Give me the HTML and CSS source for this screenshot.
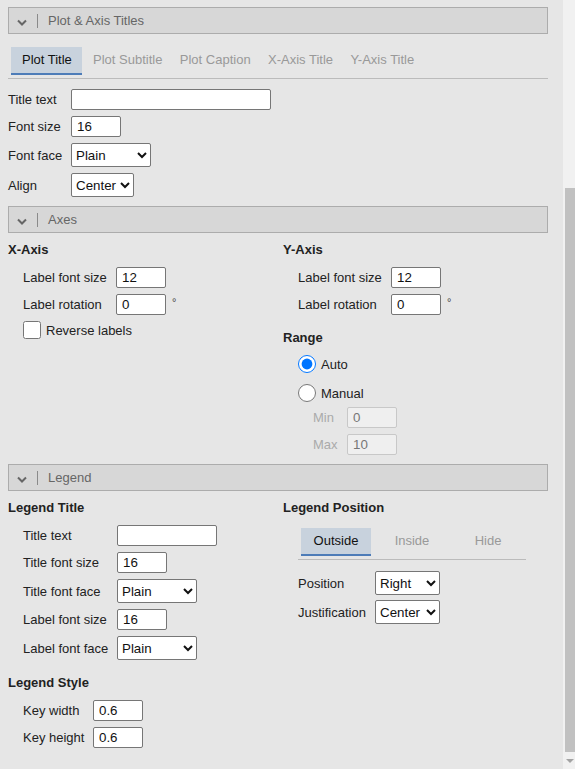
FILE: index.html
```html
<!DOCTYPE html>
<html lang="en">
<head>
    <meta charset="UTF-8">
    <meta name="viewport" content="width=device-width, initial-scale=1.0">
    <title>Plot Options</title>
    <link rel="stylesheet" href="styles.css">
</head>
<body>

<div class="page">
  <div class="panel">

    <!-- Plot & Axis Titles -->
    <div class="section-head">
      <svg class="chevron" width="10" height="7" viewBox="0 0 10 7"><path d="M1 1.5 L5 5.5 L9 1.5" fill="none" stroke="#666" stroke-width="2"/></svg>
      <span class="sep"></span>
      <span class="section-title">Plot &amp; Axis Titles</span>
    </div>

    <ul class="tabs tabs-top">
      <li class="tab active">Plot Title</li>
      <li class="tab">Plot Subtitle</li>
      <li class="tab">Plot Caption</li>
      <li class="tab">X-Axis Title</li>
      <li class="tab">Y-Axis Title</li>
    </ul>

    <div class="form form-title">
      <label>Title text</label>
      <input type="text" class="w200" value="">
      <label>Font size</label>
      <input type="text" class="w50" value="16">
      <label>Font face</label>
      <select class="w80"><option>Plain</option></select>
      <label>Align</label>
      <select class="w63"><option>Center</option></select>
    </div>

    <!-- Axes -->
    <div class="section-head">
      <svg class="chevron" width="10" height="7" viewBox="0 0 10 7"><path d="M1 1.5 L5 5.5 L9 1.5" fill="none" stroke="#666" stroke-width="2"/></svg>
      <span class="sep"></span>
      <span class="section-title">Axes</span>
    </div>

    <div class="columns">
      <div class="col">
        <h3>X-Axis</h3>
        <div class="form form-axis">
          <label>Label font size</label>
          <div class="field"><input type="text" class="w50" value="12"></div>
          <label>Label rotation</label>
          <div class="field"><input type="text" class="w50" value="0"><span class="deg">&deg;</span></div>
        </div>
        <label class="check"><input type="checkbox"> Reverse labels</label>
      </div>
      <div class="col">
        <h3>Y-Axis</h3>
        <div class="form form-axis">
          <label>Label font size</label>
          <div class="field"><input type="text" class="w50" value="12"></div>
          <label>Label rotation</label>
          <div class="field"><input type="text" class="w50" value="0"><span class="deg">&deg;</span></div>
        </div>
        <h3 class="sub">Range</h3>
        <div class="radios">
          <label class="radio"><input type="radio" name="range" checked> Auto</label>
          <label class="radio"><input type="radio" name="range"> Manual</label>
        </div>
        <div class="form form-range">
          <label>Min</label>
          <input type="text" class="w50" value="0" disabled>
          <label>Max</label>
          <input type="text" class="w50" value="10" disabled>
        </div>
      </div>
    </div>

    <!-- Legend -->
    <div class="section-head">
      <svg class="chevron" width="10" height="7" viewBox="0 0 10 7"><path d="M1 1.5 L5 5.5 L9 1.5" fill="none" stroke="#666" stroke-width="2"/></svg>
      <span class="sep"></span>
      <span class="section-title">Legend</span>
    </div>

    <div class="columns">
      <div class="col">
        <h3>Legend Title</h3>
        <div class="form form-legend">
          <label>Title text</label>
          <input type="text" class="w100" value="">
          <label>Title font size</label>
          <input type="text" class="w50" value="16">
          <label>Title font face</label>
          <select class="w80"><option>Plain</option></select>
          <label>Label font size</label>
          <input type="text" class="w50" value="16">
          <label>Label font face</label>
          <select class="w80"><option>Plain</option></select>
        </div>
        <h3 class="sub">Legend Style</h3>
        <div class="form form-style">
          <label>Key width</label>
          <input type="text" class="w50" value="0.6">
          <label>Key height</label>
          <input type="text" class="w50" value="0.6">
        </div>
      </div>
      <div class="col">
        <h3>Legend Position</h3>
        <ul class="tabs tabs-small">
          <li class="tab active">Outside</li>
          <li class="tab">Inside</li>
          <li class="tab">Hide</li>
        </ul>
        <div class="form form-position">
          <label>Position</label>
          <select class="w64"><option>Right</option></select>
          <label>Justification</label>
          <select class="w64"><option>Center</option></select>
        </div>
      </div>
    </div>

  </div>

  <div class="scrollbar">
    <div class="track"></div>
    <div class="thumb"></div>
    <div class="arrow"></div>
  </div>
</div>

</body>
</html>
```

FILE: styles.css
```css
body {
    margin: 0;
    height: 769px;
    overflow: hidden;
    background-color: #e6e6e6;
    font-family: 'Liberation Sans', Arial, sans-serif;
    font-size: 13px;
    color: #222;
}

.page {
    display: flex;
    height: 769px;
}

.panel {
    width: 540px;
    padding: 7px 15px 0 8px;
}

/* collapsible section header */
.section-head {
    display: flex;
    align-items: center;
    height: 27px;
    box-sizing: border-box;
    padding: 0 8px;
    background-color: #d7d7d7;
    border: 1px solid #acacac;
    color: #666;
}

.chevron {
    margin-top: 3px;
}

.sep {
    width: 1px;
    height: 14px;
    margin-left: 10px;
    background-color: #8a8a8a;
}

.section-title {
    margin-left: 10px;
}

/* tabs */
.tabs {
    list-style-type: none;
    margin: 0;
    display: flex;
    border-bottom: 1px solid #bbb;
}

.tab {
    height: 28px;
    box-sizing: border-box;
    line-height: 26px;
    color: #999;
    border-bottom: 2px solid transparent;
}

.tab.active {
    background-color: #c8d2dd;
    border-bottom-color: #4d7cb8;
    color: #111;
}

.tabs-top {
    margin-top: 13px;
    padding: 0 0 3px 3px;
}

.tabs-top .tab {
    padding: 0 8.7px;
}

.tabs-top .tab:first-child {
    padding: 0 10px 0 11px;
    margin-right: 2.5px;
}

.tabs-small {
    width: 225px;
    margin: 13px 0 0 15px;
    padding: 0 0 3px 3px;
    gap: 6px;
}

.tabs-small .tab {
    width: 70px;
    text-align: center;
}

/* forms */
.form {
    display: grid;
    row-gap: 6px;
    align-items: center;
    justify-items: start;
}

.form label {
    color: #222;
}

.form-title {
    grid-template-columns: 63px auto;
    margin: 10px 0 9px;
}

.form-axis {
    grid-template-columns: 93px auto;
    margin: 10px 0 0 15px;
}

.form-range {
    grid-template-columns: 34px auto;
    margin: 5px 0 0 30px;
}

.form-range label {
    color: #aaa;
}

.form-legend {
    grid-template-columns: 94px auto;
    margin: 10px 0 0 15px;
}

.form-style {
    grid-template-columns: 70px auto;
    margin: 10px 0 0 15px;
}

.form-position {
    grid-template-columns: 77px auto;
    row-gap: 5px;
    margin: 11px 0 0 15px;
}

.field {
    display: flex;
    align-items: center;
}

.deg {
    margin-left: 6px;
    margin-top: -6px;
    font-size: 11px;
    color: #444;
}

input[type="text"] {
    height: 21px;
    box-sizing: border-box;
    margin: 0;
    padding: 1px 5px;
    border: 1px solid #767676;
    border-radius: 2px;
    background-color: #fff;
    font-family: 'Liberation Sans', Arial, sans-serif;
    font-size: 13.33px;
    color: #111;
}

input[type="text"]:disabled {
    background-color: #efefef;
    border-color: #c8c8c8;
    color: #777;
}

select {
    height: 24px;
    box-sizing: border-box;
    margin: 0;
    border: 1px solid #767676;
    border-radius: 2px;
    background-color: #fff;
    font-family: 'Liberation Sans', Arial, sans-serif;
    font-size: 13.33px;
    color: #111;
}

.w50 { width: 50px; }
.w63 { width: 63px; }
.w64 { width: 65px; }
.w80 { width: 80px; }
.w100 { width: 100px; }
.w200 { width: 200px; }

/* two column sections */
.columns {
    display: grid;
    grid-template-columns: 275px 1fr;
    margin-bottom: 9px;
}

h3 {
    margin: 9px 0 0;
    font-size: 13px;
    line-height: 15px;
    color: #222;
}

h3.sub {
    margin-top: 15px;
}

.check {
    display: flex;
    align-items: center;
    margin: 6px 0 0 15px;
}

.check input {
    width: 18px;
    height: 18px;
    margin: 0 5px 0 0;
}

.radios {
    display: flex;
    flex-direction: column;
    gap: 11px;
    margin: 10px 0 0 15px;
}

.radio {
    display: flex;
    align-items: center;
}

.radio input {
    width: 18px;
    height: 18px;
    margin: 0 5px 0 0;
}

/* fake window scrollbar */
.scrollbar {
    width: 12px;
    display: flex;
    flex-direction: column;
    background-color: #f1f1f1;
}

.track {
    height: 188px;
}

.thumb {
    flex: 1;
    margin-left: 2px;
    background-color: #c1c1c1;
}

.arrow {
    height: 17px;
    display: flex;
    justify-content: center;
    align-items: center;
}

.arrow::before {
    content: "";
    border-left: 4px solid transparent;
    border-right: 4px solid transparent;
    border-top: 4px solid #a3a3a3;
    margin-left: 2px;
}
```
